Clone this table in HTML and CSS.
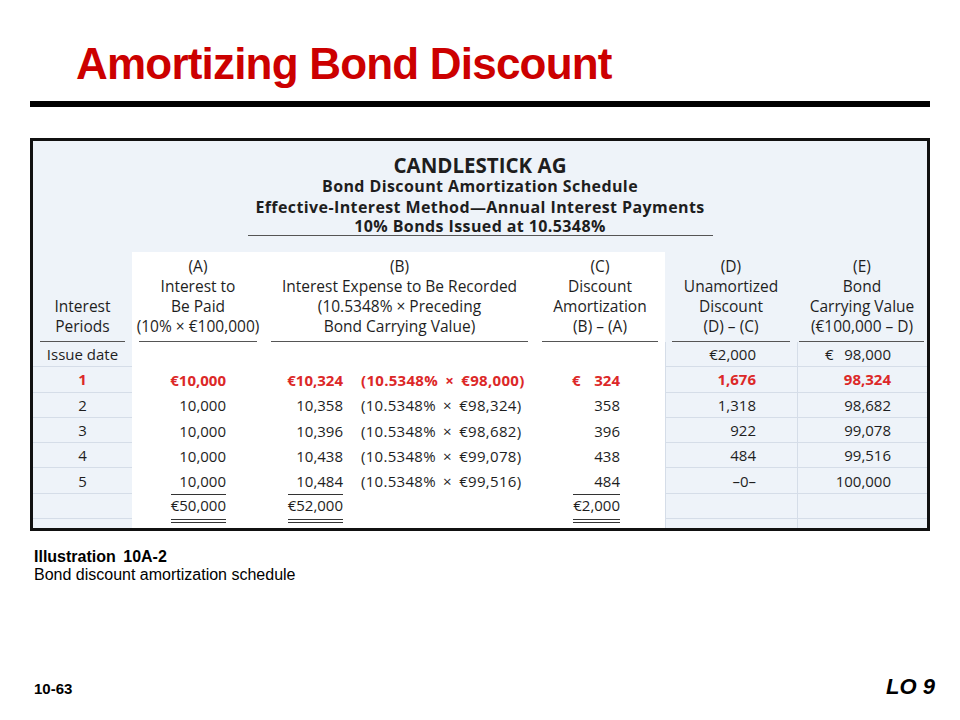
FILE: index.html
```html
<!DOCTYPE html>
<html>
<head>
<meta charset="utf-8">
<link rel="stylesheet" href="styles.css">
</head>
<body>
<div class="slide">
  <h1 class="title">Amortizing Bond Discount</h1>
  <div class="rule"></div>
  <div class="figure">
    <div class="fhead">
      <div class="co">CANDLESTICK AG</div>
      <div class="sub">Bond Discount Amortization Schedule</div>
      <div class="sub">Effective-Interest Method—Annual Interest Payments</div>
      <div class="sub last">10% Bonds Issued at 10.5348%</div>
      <div class="fline"></div>
    </div>
    <div class="tbl">
      <div class="h"><div class="ht">Interest<br>Periods</div><div class="ul"></div></div>
      <div class="h w"><div class="ht">(A)<br>Interest to<br>Be Paid<br>(10% × €100,000)</div><div class="ul"></div></div>
      <div class="h w"><div class="ht">(B)<br>Interest Expense to Be Recorded<br>(10.5348% × Preceding<br>Bond Carrying Value)</div><div class="ul"></div></div>
      <div class="h w"><div class="ht">(C)<br>Discount<br>Amortization<br>(B) – (A)</div><div class="ul"></div></div>
      <div class="h"><div class="ht">(D)<br>Unamortized<br>Discount<br>(D) – (C)</div><div class="ul"></div></div>
      <div class="h he"><div class="ht">(E)<br>Bond<br>Carrying Value<br>(€100,000 – D)</div><div class="ul"></div></div>

      <div class="c p">Issue date</div>
      <div class="c w a"></div>
      <div class="c w b"></div>
      <div class="c w cc"></div>
      <div class="c d">€2,000</div>
      <div class="c e"><span class="eu e2"><span>€</span><span>98,000</span></span></div>

      <div class="c p r">1</div>
      <div class="c w a r">€10,000</div>
      <div class="c w b r"><span class="num">€10,324</span><span class="f">(10.5348% × €98,000)</span></div>
      <div class="c w cc r"><span class="eu"><span>€</span><span>324</span></span></div>
      <div class="c d r">1,676</div>
      <div class="c e r">98,324</div>

      <div class="c p">2</div>
      <div class="c w a">10,000</div>
      <div class="c w b"><span class="num">10,358</span><span class="f">(10.5348% × €98,324)</span></div>
      <div class="c w cc">358</div>
      <div class="c d">1,318</div>
      <div class="c e">98,682</div>

      <div class="c p">3</div>
      <div class="c w a">10,000</div>
      <div class="c w b"><span class="num">10,396</span><span class="f">(10.5348% × €98,682)</span></div>
      <div class="c w cc">396</div>
      <div class="c d">922</div>
      <div class="c e">99,078</div>

      <div class="c p">4</div>
      <div class="c w a">10,000</div>
      <div class="c w b"><span class="num">10,438</span><span class="f">(10.5348% × €99,078)</span></div>
      <div class="c w cc">438</div>
      <div class="c d">484</div>
      <div class="c e">99,516</div>

      <div class="c p">5</div>
      <div class="c w a">10,000</div>
      <div class="c w b"><span class="num">10,484</span><span class="f">(10.5348% × €99,516)</span></div>
      <div class="c w cc">484</div>
      <div class="c d">–0–</div>
      <div class="c e">100,000</div>

      <div class="c p t"></div>
      <div class="c w a t"><span class="tot">€50,000</span></div>
      <div class="c w b t"><span class="num"><span class="tot">€52,000</span></span></div>
      <div class="c w cc t"><span class="tot">€2,000</span></div>
      <div class="c d t"></div>
      <div class="c e t"></div>

      <div class="c p z"></div>
      <div class="c w z"></div>
      <div class="c w z"></div>
      <div class="c w z"></div>
      <div class="c d z"></div>
      <div class="c e z"></div>
    </div>
  </div>
  <div class="caption">
    <div class="cap1">Illustration 10A-2</div>
    <div class="cap2">Bond discount amortization schedule</div>
  </div>
  <div class="footer">
    <span class="pg">10-63</span>
    <span class="lo">LO 9</span>
  </div>
</div>
</body>
</html>
```

FILE: styles.css
```css
* { box-sizing: border-box; margin: 0; padding: 0; }
body { margin: 0; background: #fff; }

.slide {
  width: 960px;
  height: 720px;
  display: flex;
  flex-direction: column;
  font-family: "Liberation Sans", Arial, sans-serif;
  color: #000;
  background: #fff;
}

.title {
  margin: 42px 0 0 76px;
  font-size: 44px;
  line-height: 44px;
  letter-spacing: -0.8px;
  font-weight: 700;
  color: #cc0000;
}

.rule {
  margin: 15px 30px 0;
  height: 6px;
  background: #000;
}

.figure {
  margin: 31px 30px 0;
  border: 3px solid #111;
  background: #eef3f9;
  font-family: "Open Sans", "Noto Sans", sans-serif;
  color: #1e1e1e;
}

.fhead {
  height: 111px;
  padding-top: 13px;
  display: flex;
  flex-direction: column;
  align-items: center;
  text-align: center;
  font-weight: 700;
}
.co { font-size: 20.5px; line-height: 22px; }
.sub { font-size: 16px; line-height: 20.5px; letter-spacing: 0.4px; }
.sub.last { line-height: 18px; }
.fline { width: 465px; border-top: 1.5px solid #555; }

.tbl {
  display: grid;
  grid-template-columns: 99px 132px 271px 130px 132px 130px;
  grid-template-rows: 90px repeat(7, 25.3px) 8.9px;
  font-size: 15px;
}

.w { background: #fff; }

.h {
  display: flex;
  flex-direction: column;
  justify-content: flex-end;
  text-align: center;
  font-size: 15.5px;
  line-height: 20px;
  white-space: nowrap;
}
.ht { margin-bottom: 5.5px; }
.ul { border-top: 1.5px solid #555; margin: 0 7px; }
.he .ul { margin: 0 3px 0 2px; }

.c {
  display: flex;
  align-items: center;
  justify-content: flex-end;
  line-height: 20px;
  white-space: nowrap;
}
.p, .d, .e { border-bottom: 1px solid #d5dde8; }
.d, .e { border-left: 1px solid #d5dde8; }
.z { border-bottom: none; }

.p { justify-content: center; }
.a { padding-right: 38px; }
.b { justify-content: flex-start; }
.b .num { width: 79px; display: flex; justify-content: flex-end; }
.b .f { margin-left: 18px; letter-spacing: 0.3px; word-spacing: 3px; }
.cc { padding-right: 45px; }
.d { padding-right: 41px; }
.e { padding-right: 36px; }

.eu { display: flex; justify-content: space-between; width: 48px; }
.eu.e2 { width: 66px; }

.r { color: #dc2828; font-weight: 700; }

.t { align-items: flex-start; }
.tot {
  position: relative;
  z-index: 1;
  display: inline-block;
  line-height: 21px;
  border-top: 1.5px solid #333;
  padding-bottom: 3.5px;
  border-bottom: 4px double #333;
}

.caption {
  margin: 17.5px 0 0 34px;
  font-size: 16px;
  line-height: 18px;
}
.cap1 { font-weight: 700; word-spacing: 3px; }

.footer {
  margin-top: auto;
  margin-bottom: 20px;
  height: 26px;
  line-height: 26px;
  display: flex;
  justify-content: space-between;
  align-items: baseline;
  padding: 0 25px 0 34px;
}
.pg { font-size: 15px; font-weight: 700; }
.lo { font-size: 22px; font-weight: 700; font-style: italic; }
```
